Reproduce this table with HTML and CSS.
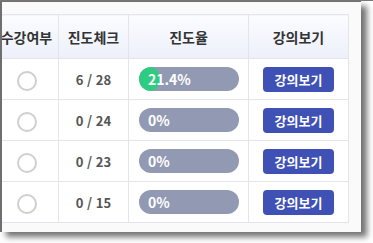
FILE: index.html
```html
<!DOCTYPE html>
<html lang="ko">
<head>
  <meta charset="UTF-8"/>
  <meta name="viewport" content="width=device-width,initial-scale=1"/>
  <title>수강 현황</title>
  <link rel="stylesheet" href="styles.css">
</head>
<body>

  <!-- 강의 목록 패널 -->
  <div class="panel">
    <table class="course-table">
      <colgroup>
        <col class="c-check"><col class="c-count"><col class="c-rate"><col class="c-view">
      </colgroup>
      <thead>
        <tr>
          <th>수강여부</th>
          <th>진도체크</th>
          <th>진도율</th>
          <th>강의보기</th>
        </tr>
      </thead>
      <tbody>
        <tr>
          <td><span class="radio"></span></td>
          <td class="count">6 / 28</td>
          <td><div class="bar"><div class="fill" style="width:21.4%"></div><span>21.4%</span></div></td>
          <td><a href="#" class="btn">강의보기</a></td>
        </tr>
        <tr>
          <td><span class="radio"></span></td>
          <td class="count">0 / 24</td>
          <td><div class="bar"><span>0%</span></div></td>
          <td><a href="#" class="btn">강의보기</a></td>
        </tr>
        <tr>
          <td><span class="radio"></span></td>
          <td class="count">0 / 23</td>
          <td><div class="bar"><span>0%</span></div></td>
          <td><a href="#" class="btn">강의보기</a></td>
        </tr>
        <tr>
          <td><span class="radio"></span></td>
          <td class="count">0 / 15</td>
          <td><div class="bar"><span>0%</span></div></td>
          <td><a href="#" class="btn">강의보기</a></td>
        </tr>
      </tbody>
    </table>
  </div>

</body>
</html>
```

FILE: styles.css
```css
/* === 기본 === */
* { margin:0; padding:0; box-sizing:border-box; }
html, body { width:100%; height:100%; overflow:hidden; }
body {
  background:#fff;
  font-family:"Noto Sans CJK KR", "Noto Sans", sans-serif;
  border-top:1px solid #777;
}

/* === 패널 (그림자 있는 틀) === */
.panel {
  width:361px; height:231px;
  background:#fafafa;
  border-left:2px solid #6f6f6f;
  border-top:1px solid #6f6f6f;
  padding:12px 13px 8px 0;
  overflow:hidden;
  box-shadow:6px 5px 6px rgba(0,0,0,.55);
}

/* === 표 === */
.course-table {
  margin-left:-8px;
  border-collapse:collapse;
  table-layout:fixed;
  width:354px;
  background:#fff;
  border:1px solid #d9dae0;
}
.c-check { width:64px; }
.c-count { width:70px; }
.c-rate  { width:120px; }
.c-view  { width:100px; }

.course-table th, .course-table td {
  border:1px solid #e4e5ea;
  text-align:center;
  vertical-align:middle;
}
.course-table th {
  height:44px;
  font-size:14px; font-weight:700; color:#333;
  background:linear-gradient(#fbfcff, #edf0fa);
}
.course-table td { height:41px; }

.radio {
  display:inline-block;
  width:20px; height:20px;
  border:2px solid #cfcfcf; border-radius:50%;
  vertical-align:middle;
}
.count { font-size:13px; font-weight:700; color:#555; }

/* === 진도율 바 === */
.bar {
  position:relative;
  width:100px; height:24px;
  margin-left:10px;
  background:#9299b3;
  border-radius:12px;
  overflow:hidden;
  text-align:left;
}
.fill {
  position:absolute; top:0; left:0; bottom:0;
  background:#2ecc80;
  border-radius:12px;
}
.bar span {
  position:relative;
  display:block;
  padding-left:9px;
  line-height:24px;
  font-size:14px; font-weight:700; color:#fff;
}

/* === 버튼 === */
.btn {
  display:inline-block;
  width:71px; height:25px;
  line-height:25px;
  background:#3f51b5;
  color:#fff;
  font-size:13px; font-weight:700;
  border-radius:4px;
  text-decoration:none;
}
```
